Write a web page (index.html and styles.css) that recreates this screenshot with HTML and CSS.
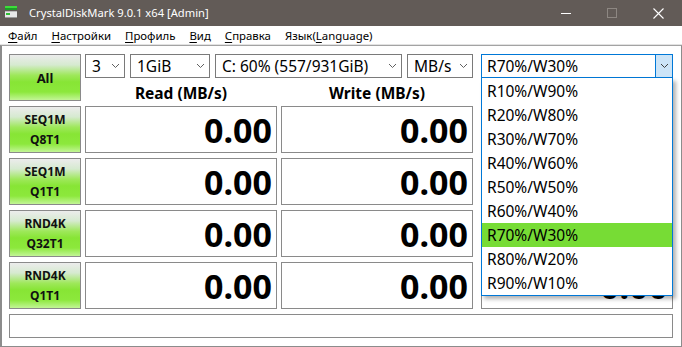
FILE: index.html
```html
<!DOCTYPE html>
<html lang="ru">
<head>
  <meta charset="UTF-8">
  <title>CrystalDiskMark 9.0.1 x64 [Admin]</title>
  <link rel="stylesheet" href="styles.css">
</head>
<body>
  <div class="window">
    <header class="titlebar">
      <svg class="app-icon" width="13" height="13" viewBox="0 0 13 13">
        <rect x="0" y="0" width="12" height="2" fill="#3ddc3a"/>
        <rect x="0" y="2" width="12" height="2" fill="#1f9a2a"/>
        <rect x="0" y="5" width="12" height="7" fill="#e8e8e8"/>
        <rect x="0" y="5" width="12" height="1" fill="#bdbdbd"/>
        <rect x="1" y="7" width="4" height="2" fill="#2fbf35"/>
        <rect x="0" y="11" width="12" height="1" fill="#9a9a9a"/>
      </svg>
      <span class="title">CrystalDiskMark 9.0.1 x64 [Admin]</span>
      <div class="caption-btns">
        <span class="cap-btn">
          <svg width="10" height="10" viewBox="0 0 10 10"><line x1="0" y1="5.5" x2="10" y2="5.5" stroke="#fff" stroke-width="1"/></svg>
        </span>
        <span class="cap-btn">
          <svg width="10" height="10" viewBox="0 0 10 10"><rect x="0.5" y="0.5" width="9" height="9" fill="none" stroke="#8d8782" stroke-width="1"/></svg>
        </span>
        <span class="cap-btn">
          <svg width="11" height="11" viewBox="0 0 11 11"><path d="M0.5 0.5 L10.5 10.5 M10.5 0.5 L0.5 10.5" stroke="#fff" stroke-width="1.1"/></svg>
        </span>
      </div>
    </header>

    <nav class="menubar">
      <span class="menu-item"><u>Ф</u>айл</span>
      <span class="menu-item"><u>Н</u>астройки</span>
      <span class="menu-item"><u>П</u>рофиль</span>
      <span class="menu-item"><u>В</u>ид</span>
      <span class="menu-item"><u>С</u>правка</span>
      <span class="menu-item">Язык(<u>L</u>anguage)</span>
    </nav>

    <main class="client">
      <div class="bench">
        <div class="test-btn all">All</div>

        <div class="selectors">
          <div class="combo w-count"><span class="combo-text">3</span><span class="arrow"><svg width="7" height="4" viewBox="0 0 7 4"><polyline points="0,0 3.5,3.5 7,0" fill="none" stroke="#606060"/></svg></span></div>
          <div class="combo w-size"><span class="combo-text">1GiB</span><span class="arrow"><svg width="7" height="4" viewBox="0 0 7 4"><polyline points="0,0 3.5,3.5 7,0" fill="none" stroke="#606060"/></svg></span></div>
          <div class="combo w-drive"><span class="combo-text">C: 60% (557/931GiB)</span><span class="arrow"><svg width="7" height="4" viewBox="0 0 7 4"><polyline points="0,0 3.5,3.5 7,0" fill="none" stroke="#606060"/></svg></span></div>
          <div class="combo w-unit"><span class="combo-text">MB/s</span><span class="arrow"><svg width="7" height="4" viewBox="0 0 7 4"><polyline points="0,0 3.5,3.5 7,0" fill="none" stroke="#606060"/></svg></span></div>
        </div>

        <div class="combo mix-combo">
          <span class="combo-text">R70%/W30%</span>
          <span class="arrow open"><svg width="7" height="4" viewBox="0 0 7 4"><polyline points="0,0 3.5,3.5 7,0" fill="none" stroke="#404040"/></svg></span>
          <ul class="droplist">
            <li>R10%/W90%</li>
            <li>R20%/W80%</li>
            <li>R30%/W70%</li>
            <li>R40%/W60%</li>
            <li>R50%/W50%</li>
            <li>R60%/W40%</li>
            <li class="selected">R70%/W30%</li>
            <li>R80%/W20%</li>
            <li>R90%/W10%</li>
          </ul>
        </div>

        <div class="col-head">Read (MB/s)</div>
        <div class="col-head">Write (MB/s)</div>
        <div class="col-head mix">Mix (MB/s)</div>

        <div class="test-btn">SEQ1M<br>Q8T1</div>
        <div class="value">0.00</div>
        <div class="value">0.00</div>
        <div class="value mix">0.00</div>

        <div class="test-btn">SEQ1M<br>Q1T1</div>
        <div class="value">0.00</div>
        <div class="value">0.00</div>
        <div class="value mix">0.00</div>

        <div class="test-btn">RND4K<br>Q32T1</div>
        <div class="value">0.00</div>
        <div class="value">0.00</div>
        <div class="value mix">0.00</div>

        <div class="test-btn">RND4K<br>Q1T1</div>
        <div class="value">0.00</div>
        <div class="value">0.00</div>
        <div class="value mix">0.00</div>

        <div class="comment"></div>
      </div>
    </main>
  </div>
</body>
</html>
```

FILE: styles.css
```css
* { box-sizing: border-box; margin: 0; padding: 0; }
body {
  font-family: 'Noto Sans', 'Open Sans', sans-serif;
  background: #fff;
  color: #000;
  overflow: hidden;
}
.window {
  width: 682px;
  height: 347px;
  display: flex;
  flex-direction: column;
}

/* title bar */
.titlebar {
  height: 26px;
  background: #625b57;
  display: flex;
  align-items: center;
  color: #fff;
  padding-left: 5px;
  padding-right: 1px;
}
.app-icon { margin-top: -2px; }
.title {
  margin-left: 11px;
  font-size: 11.2px;
  margin-top: -1px;
}
.caption-btns {
  margin-left: auto;
  display: flex;
  height: 100%;
}
.cap-btn {
  width: 46px;
  height: 100%;
  display: flex;
  align-items: center;
  justify-content: center;
}

/* menu */
.menubar {
  height: 19px;
  display: flex;
  align-items: center;
  padding-left: 1px;
  border-bottom: 1px solid #e2e2e2;
  font-size: 11.4px;
}
.menu-item { padding: 0 7px; }
.menu-item u { text-decoration-thickness: 1px; text-underline-offset: 2px; }

/* client area */
.client {
  flex: 1;
  border-top: 1px solid #a3a3a3;
  border-left: 2px solid #8c8c8c;
  border-right: 1px solid #8c8c8c;
  border-bottom: 1px solid #8c8c8c;
  padding: 8px 8px 0 7px;
}
.bench {
  display: grid;
  grid-template-columns: 72px 192px 192px 196px;
  grid-template-rows: 24px 18px 47px 47px 47px 47px 24px;
  column-gap: 4px;
  row-gap: 5px;
}

.test-btn {
  border: 1px solid #8a8a8a;
  background: linear-gradient(to bottom, #ececec 0%, #d6ead0 22%, #9ee85a 45%, #87e535 60%, #8ce83c 82%, #c2f596 100%);
  font-size: 12px;
  font-weight: bold;
  line-height: 20px;
  text-align: center;
  display: flex;
  align-items: center;
  justify-content: center;
  color: #111;
}
.test-btn.all {
  grid-row: 1 / 3;
  font-size: 13px;
}

.selectors {
  grid-column: 2 / 4;
  display: flex;
  gap: 5px;
}
.combo {
  position: relative;
  height: 24px;
  border: 1px solid #7a7a7a;
  background: #fff;
  display: flex;
  align-items: center;
  font-size: 15.5px;
}
.combo-text {
  flex: 1;
  padding-left: 6px;
  white-space: nowrap;
  margin-top: -1px;
}
.arrow {
  width: 17px;
  height: 100%;
  display: flex;
  align-items: center;
  justify-content: center;
}
.w-count { width: 40px; }
.w-size { width: 80px; }
.w-drive { width: 187px; }
.w-unit { width: 66px; }

.mix-combo {
  justify-self: end;
  width: 192px;
  border-color: #0078d7;
}
.mix-combo .combo-text { padding-left: 5px; }
.arrow.open {
  width: 17px;
  background: #cce4f7;
  border-left: 1px solid #0078d7;
}
.droplist {
  position: absolute;
  left: -1px;
  top: calc(100% + 1px);
  width: 192px;
  list-style: none;
  background: #fff;
  border: 1px solid #0078d7;
  border-top: none;
  padding-top: 1px;
  box-shadow: 3px 3px 4px rgba(0, 0, 0, 0.3);
  z-index: 10;
}
.droplist li {
  height: 24px;
  line-height: 24px;
  padding-left: 5px;
  font-size: 15.5px;
  white-space: nowrap;
}
.droplist li.selected { background: #77dc35; }

.col-head {
  font-size: 15.5px;
  font-weight: bold;
  text-align: center;
  line-height: 20px;
  height: 18px;
}
.col-head.mix, .value.mix {
  justify-self: end;
  width: 192px;
}
/* covered by the open list */
.col-head.mix { visibility: hidden; }

.value {
  border: 1px solid #8a8a8a;
  background: #fff;
  font-size: 34px;
  font-weight: bold;
  text-align: right;
  padding-right: 4px;
  line-height: 45px;
  padding-top: 1px;
}

.comment {
  grid-column: 1 / -1;
  border: 1px solid #8a8a8a;
  background: #fff;
}
```
